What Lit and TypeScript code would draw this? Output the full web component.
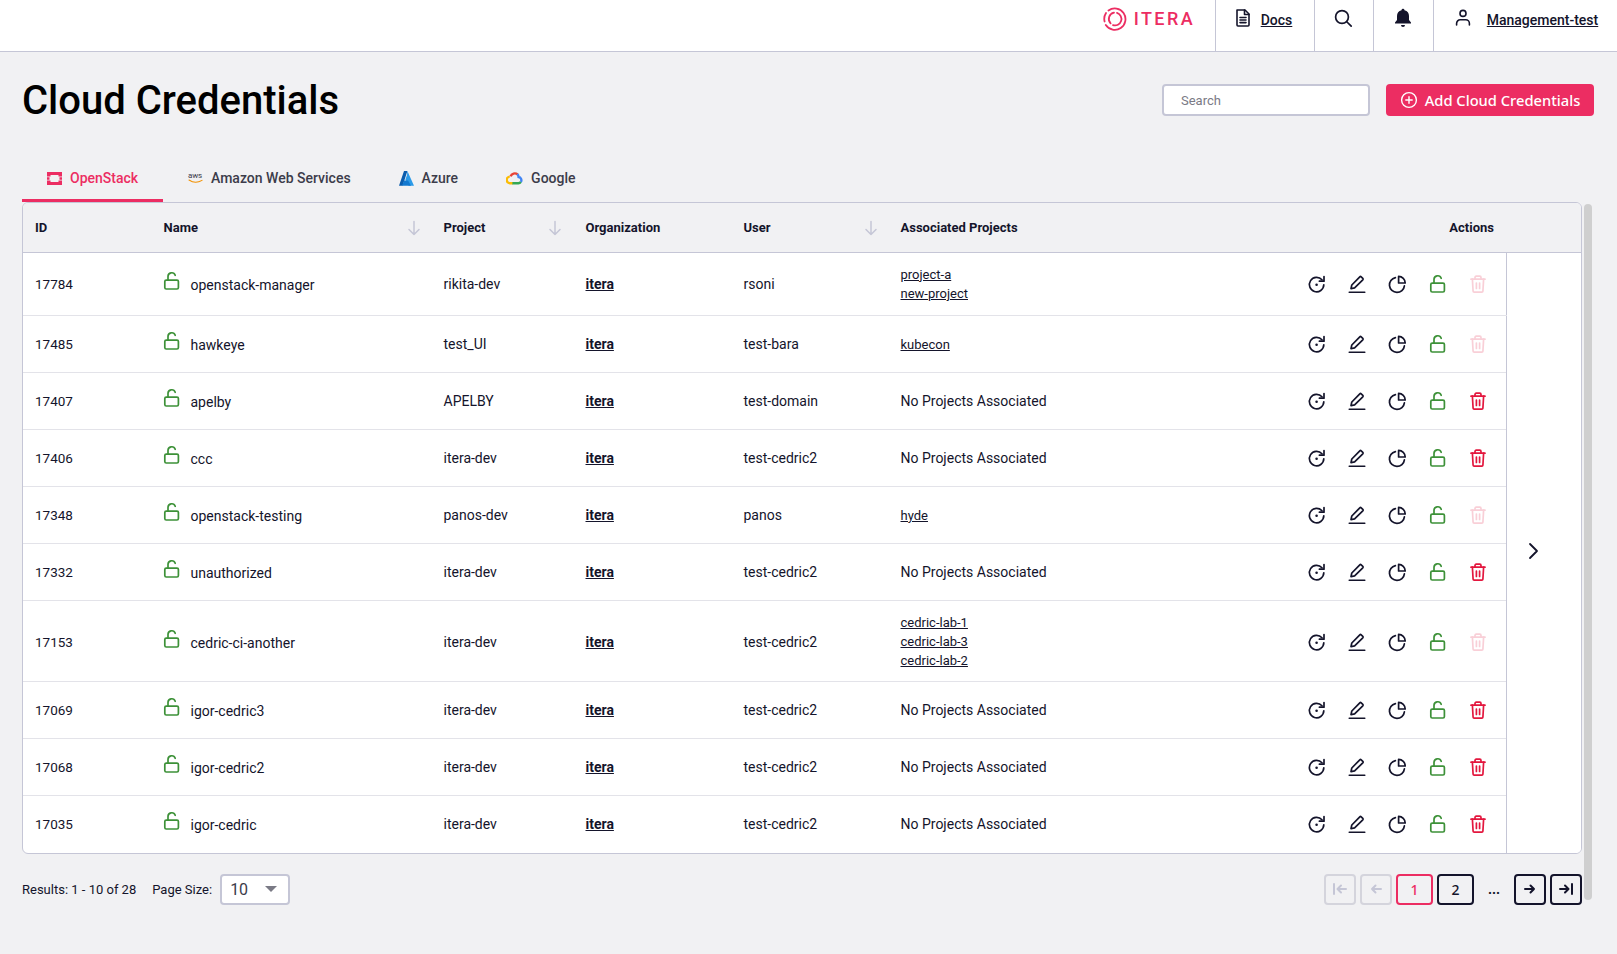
import { LitElement, html, css, svg } from "lit";
import { customElement } from "lit/decorators.js";

interface Row {
  id: number;
  name: string;
  project: string;
  user: string;
  linked: string[];
}

const rows: Row[] = [
  { id: 17784, name: "openstack-manager", project: "rikita-dev", user: "rsoni", linked: ["project-a", "new-project"] },
  { id: 17485, name: "hawkeye", project: "test_UI", user: "test-bara", linked: ["kubecon"] },
  { id: 17407, name: "apelby", project: "APELBY", user: "test-domain", linked: [] },
  { id: 17406, name: "ccc", project: "itera-dev", user: "test-cedric2", linked: [] },
  { id: 17348, name: "openstack-testing", project: "panos-dev", user: "panos", linked: ["hyde"] },
  { id: 17332, name: "unauthorized", project: "itera-dev", user: "test-cedric2", linked: [] },
  { id: 17153, name: "cedric-ci-another", project: "itera-dev", user: "test-cedric2", linked: ["cedric-lab-1", "cedric-lab-3", "cedric-lab-2"] },
  { id: 17069, name: "igor-cedric3", project: "itera-dev", user: "test-cedric2", linked: [] },
  { id: 17068, name: "igor-cedric2", project: "itera-dev", user: "test-cedric2", linked: [] },
  { id: 17035, name: "igor-cedric", project: "itera-dev", user: "test-cedric2", linked: [] },
];

const icon = (body: unknown, size = 20) =>
  html`<svg width=${size} height=${size} viewBox="0 0 20 20" fill="none" stroke="currentColor" stroke-width="1.7" stroke-linecap="round" stroke-linejoin="round">${body}</svg>`;

const reload = icon(svg`<path d="M16 5.800A7.200 7.200 0 1 0 17.800 10.800"/><path d="M18 2.600v4.600h-4.600"/><circle cx="10.600" cy="10.800" r="1.300" fill="currentColor" stroke="none"/>`);
const pencil = icon(svg`<path d="M4 14.600l.8-3.600 8-8.200a1 1 0 0 1 1.400 0l1.600 1.600a1 1 0 0 1 0 1.400l-8.200 8z"/><path d="M2.200 18.200h15.600" stroke-width="1.500"/>`);
const pie = icon(svg`<path d="M8.400 3.600A7.500 7.500 0 1 0 17.400 11.800"/><path d="M11.600 2.400a6.600 6.600 0 0 1 6.600 6.600h-6.600z"/>`);
const lock = icon(svg`<rect x="3.800" y="9.200" width="13.600" height="8.800" rx="1.400"/><path d="M7 9V5.600a3.700 3.700 0 0 1 7.200-1.300"/>`);
const trash = icon(svg`<path d="M3 5.200h14"/><path d="M7 5V3.400A1.200 1.200 0 0 1 8.200 2.200h3.600A1.200 1.200 0 0 1 13 3.400V5"/><path d="M4.400 5.200l.7 12a1 1 0 0 0 1 .9h7.800a1 1 0 0 0 1-.9l.7-12"/><path d="M8.400 9v5.400M11.600 9v5.400"/>`);
const arrowDown = html`<svg width="14" height="16" viewBox="0 0 14 16" fill="none" stroke="currentColor" stroke-width="1.5" stroke-linecap="round" stroke-linejoin="round"><path d="M7 1.500v13M2 9.500l5 5 5-5"/></svg>`;

@customElement("app-root")
export class AppRoot extends LitElement {
  static styles = css`
    :host {
      display: block;
      position: relative;
      height: 954px;
      overflow: hidden;
      background: #f1f1f3;
      color: #14142b;
      font-family: Roboto, "Liberation Sans", sans-serif;
      font-size: 14px;
    }
    a {
      color: inherit;
    }

    .topbar {
      display: flex;
      justify-content: flex-end;
      height: 52px;
      box-sizing: border-box;
      background: #fff;
      border-bottom: 1px solid #c5c6d6;
    }
    .logo {
      display: flex;
      align-items: flex-start;
      gap: 7px;
      padding: 7px 20px 0 0;
      color: #ec2d62;
      font-size: 18px;
      font-weight: 500;
      line-height: 24px;
      letter-spacing: 2.4px;
    }
    .nav {
      display: flex;
      align-items: flex-start;
      justify-content: center;
      gap: 9px;
      height: 51px;
      box-sizing: border-box;
      padding-top: 9px;
      border-left: 1px solid #c5c6d6;
    }
    .nav svg {
      margin-top: -1px;
    }
    .nav a {
      font-weight: 500;
      line-height: 23px;
    }
    .nav.docs {
      width: 99px;
      padding-right: 4px;
    }
    .nav.find {
      width: 59px;
      padding-right: 3px;
    }
    .nav.bell {
      width: 60px;
      padding-right: 1px;
    }
    .nav.user {
      width: 184px;
      gap: 14px;
    }

    main {
      padding: 0 23px 0 22px;
    }
    .title-row {
      display: flex;
      align-items: center;
      margin-top: 24px;
      height: 48px;
    }
    h1 {
      flex: 1;
      margin: 2px 0 0;
      font-size: 40px;
      font-weight: 500;
      line-height: 48px;
      color: #000;
    }
    .search {
      width: 208px;
      height: 32px;
      box-sizing: border-box;
      padding: 0 17px;
      border: 2px solid #c5c6d6;
      border-radius: 4px;
      background: #fff;
      font: 13px Roboto, sans-serif;
      color: #14142b;
    }
    .search::placeholder {
      color: #7a7a85;
    }
    .add {
      display: flex;
      align-items: center;
      justify-content: center;
      gap: 7px;
      width: 208px;
      height: 32px;
      margin-left: 16px;
      padding: 0;
      border: 0;
      border-radius: 4px;
      background: #ec2d62;
      color: #fff;
      font: 500 14.7px "Noto Sans", sans-serif;
    }

    .tabs {
      display: flex;
      height: 48px;
      margin-top: 30px;
    }
    .tab {
      display: flex;
      align-items: center;
      gap: 8px;
      height: 48px;
      box-sizing: border-box;
      padding: 0 23px 0 25px;
      font-size: 14px;
      font-weight: 500;
      color: #3c3c4a;
    }
    .tab svg,
    .tab .aws {
      flex: none;
    }
    .tab.active {
      width: 141px;
      color: #ec2d62;
      border-bottom: 3px solid #ec2d62;
      padding-top: 3px;
    }
    .aws {
      position: relative;
      display: block;
      width: 15px;
      height: 14px;
      font-size: 8px;
      line-height: 9px;
      letter-spacing: -0.2px;
      font-weight: 400;
    }
    .aws svg {
      position: absolute;
      left: 0;
      top: 8px;
    }

    .card {
      margin-right: 12px;
      border: 1px solid #c5c6d6;
      border-radius: 6px;
      overflow: hidden;
      background: #fff;
    }
    table {
      width: 100%;
      table-layout: fixed;
      border-collapse: collapse;
    }
    th {
      height: 49px;
      padding: 0 12px;
      background: #f1f1f3;
      border-bottom: 1px solid #c5c6d6;
      font-size: 13px;
      font-weight: 700;
      text-align: left;
    }
    th .sort {
      display: flex;
      align-items: center;
      justify-content: space-between;
    }
    th .sort.wide {
      margin-right: -1px;
    }
    th svg {
      color: #c5c6d6;
      display: block;
    }
    th.right {
      text-align: right;
    }
    td {
      height: 57px;
      box-sizing: border-box;
      padding: 11.5px 12px;
      border-bottom: 1px solid #e3e3e9;
      vertical-align: middle;
    }
    td.id {
      font-size: 13.5px;
    }
    tbody tr:first-child td {
      padding-bottom: 12.5px;
    }
    tbody tr:nth-child(7) td {
      padding-bottom: 10.5px;
    }
    tr:last-child td {
      border-bottom: 0;
    }
    .name {
      display: flex;
      align-items: center;
      gap: 10px;
    }
    .name svg {
      display: block;
      color: #3d9138;
      margin: -6px 0 0 -3px;
    }
    .name span {
      padding-top: 2px;
    }
    .org {
      font-weight: 700;
    }
    .links a {
      display: block;
      font-size: 13px;
      line-height: 19.2px;
    }
    .actions {
      display: flex;
      justify-content: flex-end;
      gap: 20.3px;
      padding-right: 6px;
    }
    .actions svg {
      display: block;
    }
    .green {
      color: #3d9138;
    }
    .red {
      color: #e3173e;
    }
    .red.off {
      opacity: 0.2;
    }
    tbody tr:first-child td.more,
    td.more {
      padding: 0 22px 4px 0;
      text-align: center;
      border-left: 1px solid #c5c6d6;
      border-bottom: 0;
      background: #fff;
    }
    td.more svg {
      display: inline-block;
      vertical-align: middle;
    }

    .footer {
      display: flex;
      align-items: center;
      margin: 20px 12px 0 0;
      font-size: 13px;
    }
    .page-size {
      margin: 0 8px 0 16px;
    }
    .select {
      display: flex;
      align-items: center;
      justify-content: space-between;
      width: 70px;
      height: 31px;
      box-sizing: border-box;
      padding: 0 11px 0 8px;
      border: 2px solid #c5c6d6;
      border-radius: 4px;
      background: #fff;
      font-size: 16px;
      color: #3c3c4a;
    }
    .caret {
      border-left: 6px solid transparent;
      border-right: 6px solid transparent;
      border-top: 6px solid #7a7a85;
    }
    .pager {
      display: flex;
      align-items: center;
      gap: 4px;
      margin-left: auto;
    }
    .page {
      display: flex;
      align-items: center;
      justify-content: center;
      width: 32px;
      height: 31px;
      box-sizing: border-box;
      border: 2px solid #14142b;
      border-radius: 4px;
      font-size: 14px;
      font-weight: 500;
      font-family: "Noto Sans", sans-serif;
    }
    .page.num {
      width: 37px;
    }
    .page.off {
      border-color: #d4d4dc;
      color: #c5c6d6;
    }
    .page.current {
      border-color: #ec2d62;
      color: #ec2d62;
    }
    .dots {
      width: 32px;
      text-align: center;
      font-size: 14px;
      font-weight: 700;
    }
    .scrollbar {
      position: absolute;
      left: 1584px;
      top: 204px;
      width: 8px;
      height: 696px;
      border-radius: 4px;
      background: #cfcfcf;
    }
  `;

  private renderRow(r: Row, i: number) {
    return html`<tr>
      <td class="id">${r.id}</td>
      <td>
        <div class="name">${lock}<span>${r.name}</span></div>
      </td>
      <td>${r.project}</td>
      <td><a class="org" href="#">itera</a></td>
      <td>${r.user}</td>
      <td class="links">
        ${r.linked.length
          ? r.linked.map((p) => html`<a href="#">${p}</a>`)
          : "No Projects Associated"}
      </td>
      <td>
        <div class="actions">
          ${reload}${pencil}${pie}
          <span class="green">${lock}</span>
          <span class="red ${r.linked.length ? "off" : ""}">${trash}</span>
        </div>
      </td>
      ${i === 0
        ? html`<td class="more" rowspan="10">
            <svg width="20" height="20" viewBox="0 0 20 20" fill="none" stroke="#14142b" stroke-width="1.8" stroke-linecap="round" stroke-linejoin="round"><path d="M7 3l7 7-7 7"/></svg>
          </td>`
        : ""}
    </tr>`;
  }

  render() {
    return html`
      <header class="topbar">
        <div class="logo">
          <svg width="24" height="24" viewBox="0 0 24 24" fill="none" stroke="currentColor" stroke-width="1.800" stroke-linecap="round">
            <path d="M5.500 3.500A10.700 10.700 0 1 1 2.800 18"/>
            <path d="M1.600 14.500A10.700 10.700 0 0 1 3 6"/>
            <path d="M14 5.900A6.400 6.400 0 0 1 10 18.100"/>
            <path d="M7.600 16.400A6.400 6.400 0 0 1 11 5.700"/>
          </svg>
          <span>ITERA</span>
        </div>
        <div class="nav docs">
          <svg width="18" height="20" viewBox="0 0 18 20" fill="none" stroke="#14142b" stroke-width="1.600" stroke-linejoin="round" stroke-linecap="round">
            <path d="M3 2h8l4 4v11a1 1 0 0 1-1 1H4a1 1 0 0 1-1-1z"/>
            <path d="M10.500 2v4.500H15M6 9.500h6M6 12h6M6 14.600h6"/>
          </svg>
          <a href="#">Docs</a>
        </div>
        <div class="nav find">
          <svg width="20" height="20" viewBox="0 0 20 20" fill="none" stroke="#14142b" stroke-width="1.700" stroke-linecap="round">
            <circle cx="9" cy="9" r="6.400"/>
            <path d="M14 14l4.200 4.200"/>
          </svg>
        </div>
        <div class="nav bell">
          <svg width="20" height="20" viewBox="0 0 20 20" fill="#14142b">
            <path d="M10 0.800a1.500 1.500 0 0 1 1.500 1.400A6 6 0 0 1 16 8v4l2 2.600v.9H2v-.9L4 12V8a6 6 0 0 1 4.500-5.800A1.500 1.500 0 0 1 10 .8z"/>
            <path d="M8 17h4a2 2 0 0 1-4 0z"/>
          </svg>
        </div>
        <div class="nav user">
          <svg width="20" height="20" viewBox="0 0 20 20" fill="none" stroke="#14142b" stroke-width="1.600" stroke-linecap="round">
            <circle cx="10" cy="5.400" r="3"/>
            <path d="M3.600 17v-1.600a3.600 3.600 0 0 1 3.600-3.600h5.600a3.600 3.600 0 0 1 3.600 3.600V17"/>
          </svg>
          <a href="#">Management-test</a>
        </div>
      </header>

      <main>
        <div class="title-row">
          <h1>Cloud Credentials</h1>
          <input class="search" placeholder="Search" />
          <button class="add">
            <svg width="18" height="18" viewBox="0 0 18 18" fill="none" stroke="#fff" stroke-width="1.400" stroke-linecap="round">
              <circle cx="9" cy="9" r="7.400"/>
              <path d="M9 5.800v6.400M5.800 9h6.400"/>
            </svg>
            Add Cloud Credentials
          </button>
        </div>

        <nav class="tabs">
          <div class="tab active">
            <svg width="15" height="15" viewBox="0 0 15 15" fill="#ec2d62">
              <path d="M0 1h15v4.500h-3.500v-1.500h-8v1.500H0zM0 9.500h3.500v1.500h8V9.500H15V14H0z"/>
              <path d="M0 6.300h2.500v2.400H0zM12.500 6.300H15v2.400h-2.500z"/>
            </svg>
            OpenStack
          </div>
          <div class="tab">
            <span class="aws">aws<svg width="16" height="5" viewBox="0 0 16 5" fill="none" stroke="#f29100" stroke-width="1.100" stroke-linecap="round"><path d="M1 1c4 2.800 9 2.800 13 .4"/></svg></span>
            Amazon Web Services
          </div>
          <div class="tab">
            <svg width="15" height="15" viewBox="0 0 15 15">
              <path d="M5 0h3.400L3.800 14.200a.8.8 0 0 1-.7.6H0z" fill="#0a5cad"/>
              <path d="M8.400 0L15 14.800H9.600L6.400 8.400 8 4z" fill="#2c9be8"/>
              <path d="M5 9.600h4l3 5.200H3z" fill="#1278cf"/>
            </svg>
            Azure
          </div>
          <div class="tab">
            <svg width="17" height="15" viewBox="0 0 17 15" fill="none" stroke-width="2.400">
              <path d="M4.600 5.400A4.400 4.400 0 0 1 11.600 3.400" stroke="#ea4335"/>
              <path d="M11.400 3.200A4.400 4.400 0 0 1 12.600 6 3.200 3.200 0 0 1 14.800 11" stroke="#4285f4"/>
              <path d="M14.800 11a3.200 3.200 0 0 1-2.400 1.200H6" stroke="#34a853"/>
              <path d="M6.400 12.200H4.200a3.300 3.300 0 0 1-.4-6.600" stroke="#fbbc05"/>
            </svg>
            Google
          </div>
        </nav>

        <section class="card">
          <table>
            <colgroup>
              <col style="width:128.5px" />
              <col style="width:280px" />
              <col style="width:142px" />
              <col style="width:158px" />
              <col style="width:157px" />
              <col style="width:360px" />
              <col />
              <col style="width:75px" />
            </colgroup>
            <thead>
              <tr>
                <th>ID</th>
                <th><div class="sort wide">Name ${arrowDown}</div></th>
                <th><div class="sort">Project ${arrowDown}</div></th>
                <th>Organization</th>
                <th><div class="sort wide">User ${arrowDown}</div></th>
                <th>Associated Projects</th>
                <th class="right">Actions</th>
                <th></th>
              </tr>
            </thead>
            <tbody>
              ${rows.map((r, i) => this.renderRow(r, i))}
            </tbody>
          </table>
        </section>

        <footer class="footer">
          <span>Results: 1 - 10 of 28</span>
          <span class="page-size">Page Size:</span>
          <div class="select"><span>10</span><span class="caret"></span></div>
          <div class="pager">
            <span class="page off">
              <svg width="16" height="14" viewBox="0 0 16 14" fill="none" stroke="currentColor" stroke-width="2" stroke-linecap="round" stroke-linejoin="round"><path d="M2 2v10M14 7H6M9 3.500L5.500 7 9 10.500"/></svg>
            </span>
            <span class="page off">
              <svg width="14" height="14" viewBox="0 0 14 14" fill="none" stroke="currentColor" stroke-width="2" stroke-linecap="round" stroke-linejoin="round"><path d="M12 7H3M6.500 3.500L3 7l3.500 3.500"/></svg>
            </span>
            <span class="page num current">1</span>
            <span class="page num">2</span>
            <span class="dots">...</span>
            <span class="page">
              <svg width="14" height="14" viewBox="0 0 14 14" fill="none" stroke="currentColor" stroke-width="2" stroke-linecap="round" stroke-linejoin="round"><path d="M2 7h9M7.500 3.500L11 7l-3.500 3.500"/></svg>
            </span>
            <span class="page">
              <svg width="16" height="14" viewBox="0 0 16 14" fill="none" stroke="currentColor" stroke-width="2" stroke-linecap="round" stroke-linejoin="round"><path d="M14 2v10M2 7h8M7 3.500L10.500 7 7 10.500"/></svg>
            </span>
          </div>
        </footer>
      </main>
      <div class="scrollbar"></div>
    `;
  }
}
